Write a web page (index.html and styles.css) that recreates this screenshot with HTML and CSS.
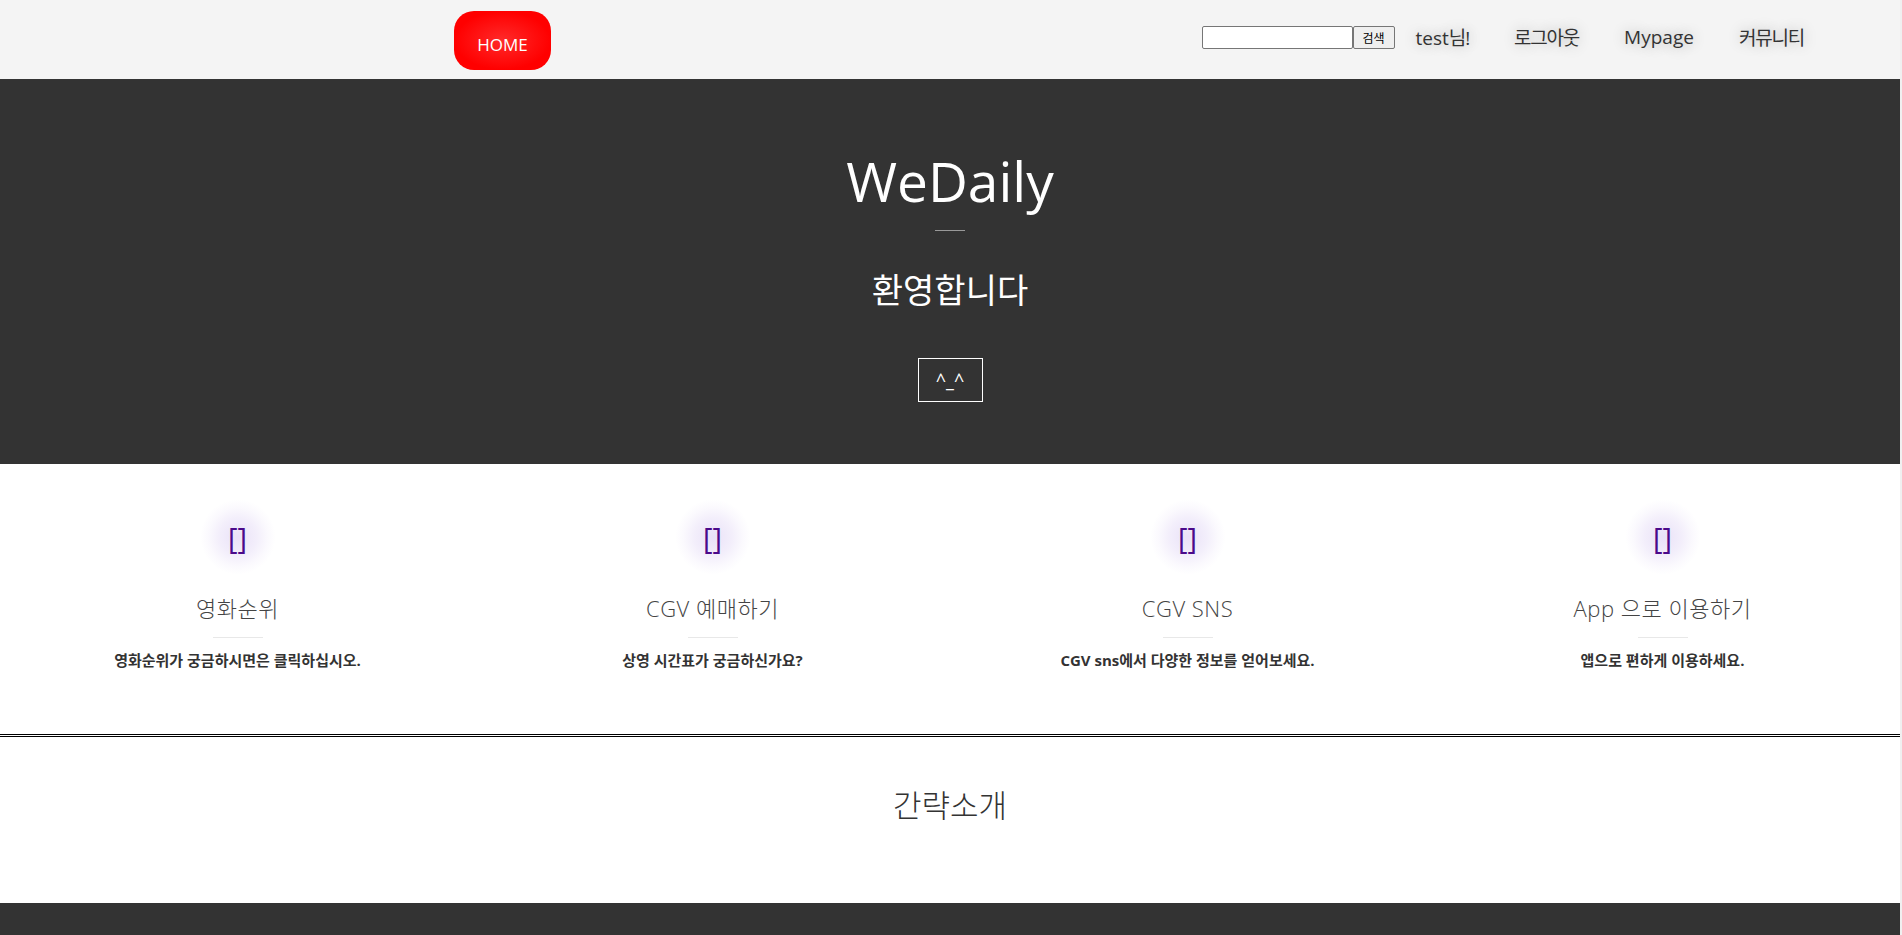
FILE: index.html
```html
<!DOCTYPE html>
<html lang="ko">
<head>
<meta charset="utf-8">
<title>WeDaily</title>
<link rel="stylesheet" href="styles.css">
</head>
<body>
<div class="page">
  <header class="topbar">
    <a class="home-btn" href="#">HOME</a>
    <div class="nav-right">
      <form class="search">
        <input class="search-input" type="text">
        <button class="search-btn" type="button">검색</button>
      </form>
      <nav class="nav">
        <a class="nav-item" href="#">test<span class="ko">님!</span></a>
        <a class="nav-item ko" href="#">로그아웃</a>
        <a class="nav-item" href="#">Mypage</a>
        <a class="nav-item ko" href="#">커뮤니티</a>
      </nav>
    </div>
  </header>

  <section class="hero">
    <h1 class="hero-title">WeDaily</h1>
    <div class="hero-rule"></div>
    <p class="hero-sub">환영합니다</p>
    <a class="hero-btn" href="#">^_^</a>
  </section>

  <section class="features">
    <div class="feature">
      <div class="feature-icon"><span>[]</span></div>
      <h3 class="feature-title">영화순위</h3>
      <div class="feature-rule"></div>
      <p class="feature-desc">영화순위가 궁금하시면은 클릭하십시오.</p>
    </div>
    <div class="feature">
      <div class="feature-icon"><span>[]</span></div>
      <h3 class="feature-title">CGV 예매하기</h3>
      <div class="feature-rule"></div>
      <p class="feature-desc">상영 시간표가 궁금하신가요?</p>
    </div>
    <div class="feature">
      <div class="feature-icon"><span>[]</span></div>
      <h3 class="feature-title">CGV SNS</h3>
      <div class="feature-rule"></div>
      <p class="feature-desc">CGV sns에서 다양한 정보를 얻어보세요.</p>
    </div>
    <div class="feature">
      <div class="feature-icon"><span>[]</span></div>
      <h3 class="feature-title">App 으로 이용하기</h3>
      <div class="feature-rule"></div>
      <p class="feature-desc">앱으로 편하게 이용하세요.</p>
    </div>
  </section>

  <section class="intro">
    <h2 class="intro-title">간략소개</h2>
  </section>

  <footer class="footer"></footer>
</div>
</body>
</html>
```

FILE: styles.css
```css
html {
  background: #f0f0f0;
}
body {
  margin: 0;
  font-family: "Open Sans", "Noto Sans CJK KR", sans-serif;
  color: #333;
}
.page {
  width: 1900px;
  background: #fff;
}
a {
  text-decoration: none;
  color: inherit;
}

/* header */
.topbar {
  height: 79px;
  background: #f4f4f4;
  display: flex;
  align-items: center;
  padding: 0 96px 0 454px;
}
.home-btn {
  width: 97px;
  height: 59px;
  border-radius: 20px;
  background: radial-gradient(ellipse at center, #ff2a2a 0%, #ff0000 70%);
  color: #fff;
  font-size: 17px;
  display: flex;
  align-items: center;
  justify-content: center;
  padding-top: 9px;
  box-sizing: border-box;
  margin-top: 1px;
}
.nav-right {
  margin-left: auto;
  display: flex;
  align-items: center;
}
.search {
  display: flex;
  margin: 0 21px 4px 0;
}
.search-input {
  width: 151px;
  height: 23px;
  box-sizing: border-box;
  border: 1px solid #767676;
  border-radius: 2px;
  background: #fff;
  padding: 0 3px;
  margin: 0;
}
.search-btn {
  width: 42px;
  height: 23px;
  box-sizing: border-box;
  border: 1px solid #767676;
  border-radius: 2px;
  background: #efefef;
  font-family: "Noto Sans CJK KR", sans-serif;
  font-size: 12px;
  padding: 0;
  margin: 0;
  color: #000;
}
.nav {
  display: flex;
  align-items: center;
  gap: 45px;
  margin-bottom: 5px;
}
.nav-item {
  font-size: 19px;
  color: #333;
  text-shadow: 0 0 14px rgba(0, 0, 0, 0.3);
}
.ko {
  letter-spacing: -1.2px;
}

/* hero */
.hero {
  background: #333;
  color: #fff;
  display: flex;
  flex-direction: column;
  align-items: center;
  padding: 74px 0 62px;
}
.hero-title {
  margin: 0;
  font-size: 55px;
  line-height: 55px;
  font-weight: 400;
}
.hero-rule {
  width: 30px;
  height: 1px;
  background: #999;
  margin-top: 22px;
}
.hero-sub {
  margin: 42px 0 0;
  font-size: 34px;
  line-height: 34px;
  font-weight: 400;
}
.hero-btn {
  margin-top: 51px;
  width: 65px;
  height: 44px;
  box-sizing: border-box;
  border: 1px solid #fff;
  display: flex;
  align-items: center;
  justify-content: center;
  font-size: 18px;
  color: #fff;
}

/* features */
.features {
  display: grid;
  grid-template-columns: repeat(4, 1fr);
  padding: 40px 0 66px;
  border-bottom: 3px double #000;
}
.feature {
  display: flex;
  flex-direction: column;
  align-items: center;
}
.feature-icon {
  width: 76px;
  height: 76px;
  margin-top: -5px;
  border-radius: 50%;
  background: radial-gradient(circle, rgba(120, 70, 210, 0.16) 0%, rgba(120, 70, 210, 0.09) 35%, rgba(120, 70, 210, 0.03) 55%, rgba(120, 70, 210, 0) 70%);
  display: flex;
  align-items: center;
  justify-content: center;
  color: #4b0a8a;
  font-size: 29px;
  font-weight: 400;
  line-height: 1;
}
.feature-title {
  margin: 22px 0 0;
  font-size: 22px;
  line-height: 22px;
  font-weight: 300;
  letter-spacing: 0.5px;
  color: #444;
}
.feature-rule {
  width: 50px;
  height: 1px;
  background: #e8e8e8;
  margin-top: 18px;
}
.feature-desc {
  margin: 15px 0 0;
  font-size: 15px;
  line-height: 15px;
  font-weight: 700;
  color: #333;
}

/* intro */
.intro {
  height: 166px;
  display: flex;
  justify-content: center;
  padding-top: 53px;
  box-sizing: border-box;
}
.intro-title {
  margin: 0;
  font-size: 31px;
  line-height: 31px;
  font-weight: 300;
  color: #333;
}

/* footer */
.footer {
  height: 120px;
  background: #333;
}
```
